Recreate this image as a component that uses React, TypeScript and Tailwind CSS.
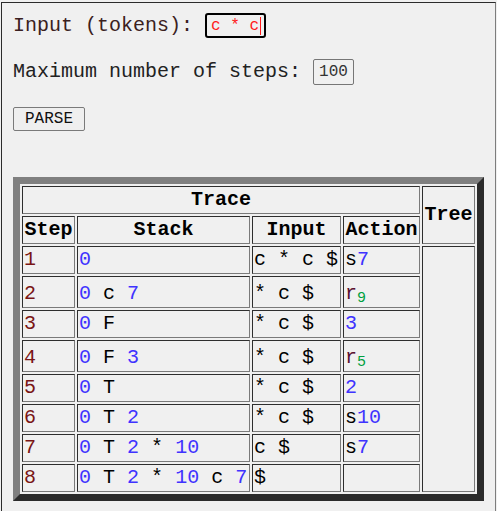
const mono = { fontFamily: '"Liberation Mono", "Courier New", monospace' };

type Tok = { t: string; c?: 'n' | 's' };

type Row = {
    step: number;
    stack: Tok[];
    input: string;
    action: 'shift' | 'reduce' | 'goto' | 'none';
    n?: number;
};

const rows: Row[] = [
    {step: 1, stack: [{t: '0', c: 'n'}], input: 'c * c $', action: 'shift', n: 7},
    {step: 2, stack: [{t: '0', c: 'n'}, {t: 'c'}, {t: '7', c: 'n'}], input: '* c $', action: 'reduce', n: 9},
    {step: 3, stack: [{t: '0', c: 'n'}, {t: 'F'}], input: '* c $', action: 'goto', n: 3},
    {step: 4, stack: [{t: '0', c: 'n'}, {t: 'F'}, {t: '3', c: 'n'}], input: '* c $', action: 'reduce', n: 5},
    {step: 5, stack: [{t: '0', c: 'n'}, {t: 'T'}], input: '* c $', action: 'goto', n: 2},
    {step: 6, stack: [{t: '0', c: 'n'}, {t: 'T'}, {t: '2', c: 'n'}], input: '* c $', action: 'shift', n: 10},
    {
        step: 7,
        stack: [{t: '0', c: 'n'}, {t: 'T'}, {t: '2', c: 'n'}, {t: '*'}, {t: '10', c: 'n'}],
        input: 'c $',
        action: 'shift',
        n: 7,
    },
    {
        step: 8,
        stack: [{t: '0', c: 'n'}, {t: 'T'}, {t: '2', c: 'n'}, {t: '*'}, {t: '10', c: 'n'}, {t: 'c'}, {t: '7', c: 'n'}],
        input: '$',
        action: 'none',
    },
];

const cell = 'border border-t-[#2e2e2e] border-l-[#2e2e2e] border-b-[#7a7a7a] border-r-[#7a7a7a] p-px leading-[24px]';

function Action({row}: { row: Row }) {
    if (row.action === 'shift') {
        return (
            <>
                <span className="text-black">s</span>
                <span className="text-[#3f33ff]">{row.n}</span>
            </>
        );
    }
    if (row.action === 'reduce') {
        return (
            <>
                <span className="text-[#5a1030]">r</span>
                <sub className="text-[#00a040]">{row.n}</sub>
            </>
        );
    }
    if (row.action === 'goto') {
        return <span className="text-[#3f33ff]">{row.n}</span>;
    }
    return null;
}

export default function App() {
    return (
        <div className="min-h-[511px] bg-[#f0f0f0] pt-[2px] pl-px" style={mono}>
            <div className="w-[495px] min-h-[509px] border-l border-t border-r border-l-[#2b2b2b] border-t-[#2b2b2b] border-r-[#7d7d7d] pl-[11px] pt-[10px] text-[20px] text-[#222]">
                <div className="flex items-center gap-3 h-[25px]">
                    <span className="text-[#3a2020] whitespace-pre">Input (tokens):</span>
                    <div className="flex items-center w-[61px] h-[25px] border-2 border-black rounded-[3px] pl-[4px] text-[16px] text-[#ff1a1a] whitespace-pre bg-[#f0f0f0]">
                        <span>c * c</span>
                        <span className="ml-px w-px h-[18px] bg-[#ff1a1a]"/>
                    </div>
                </div>
                <div className="flex items-center gap-3 h-[26px] mt-[21px]">
                    <span className="whitespace-pre">Maximum number of steps:</span>
                    <div className="flex items-center w-[41px] h-[26px] border border-[#767676] rounded-[2px] pl-[5px] text-[16px] text-[#333]">
                        100
                    </div>
                </div>
                <button
                    type="button"
                    className="mt-[22px] h-[24px] px-[11px] border border-[#7a7a7a] rounded-[2px] bg-[#efefef] text-[16px] text-[#111] leading-none"
                    style={mono}
                >
                    PARSE
                </button>
                <table
                    className="mt-[44px] border-separate border-spacing-[2px] border-[7px] border-t-[#808080] border-l-[#808080] border-b-[#2b2b2b] border-r-[#2b2b2b] text-black"
                >
                    <thead>
                    <tr>
                        <th colSpan={4} className={`${cell} h-[28px] font-bold`}>Trace</th>
                        <th rowSpan={2} className={`${cell} w-[53px] font-bold`}>Tree</th>
                    </tr>
                    <tr>
                        <th className={`${cell} w-[53px] h-[28px] font-bold`}>Step</th>
                        <th className={`${cell} w-[173px] font-bold`}>Stack</th>
                        <th className={`${cell} w-[89px] font-bold`}>Input</th>
                        <th className={`${cell} w-[77px] font-bold`}>Action</th>
                    </tr>
                    </thead>
                    <tbody>
                    {rows.map((row, i) => (
                        <tr key={row.step}>
                            <td className={`${cell} ${row.action === 'reduce' ? 'h-[32px] pt-[4px]' : 'h-[28px]'} text-[#7a1515]`}>{row.step}</td>
                            <td className={`${cell} ${row.action === 'reduce' ? 'pt-[4px]' : ''} whitespace-pre`}>
                                {row.stack.map((tok, j) => (
                                    <span key={j} className={tok.c === 'n' ? 'text-[#3f33ff]' : 'text-black'}>
                                        {j > 0 ? ' ' : ''}{tok.t}
                                    </span>
                                ))}
                            </td>
                            <td className={`${cell} ${row.action === 'reduce' ? 'pt-[4px]' : ''} whitespace-pre`}>{row.input}</td>
                            <td className={`${cell} ${row.action === 'reduce' ? 'pt-[4px]' : ''}`}><Action row={row}/></td>
                            {i === 0 && <td rowSpan={rows.length} className={cell}/>}
                        </tr>
                    ))}
                    </tbody>
                </table>
            </div>
        </div>
    );
}
